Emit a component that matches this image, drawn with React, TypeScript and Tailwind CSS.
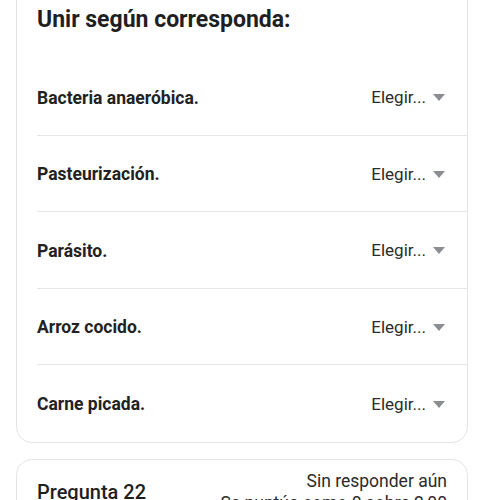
import React from "react";

const rows = [
  "Bacteria anaeróbica.",
  "Pasteurización.",
  "Parásito.",
  "Arroz cocido.",
  "Carne picada.",
];

function Caret() {
  return (
    <svg width="12" height="7" viewBox="0 0 12 7" className="ml-[7px]">
      <path d="M0 0 L12 0 L6 7 Z" fill="#8a8d91" />
    </svg>
  );
}

export default function App() {
  return (
    <div
      className="w-[484px] h-[500px] overflow-hidden bg-white text-[#212121]"
      style={{ fontFamily: "Roboto, 'Noto Sans', sans-serif" }}
    >
      <div className="mx-4 -mt-[24px] border border-[#e3e4e6] rounded-2xl bg-white">
        <div className="pl-5 pt-[29px] h-[82px]">
          <h2 className="text-[23px] font-bold leading-[28px] text-[#1f1f1f]">
            Unir según corresponda:
          </h2>
        </div>
        <div className="pl-5">
          {rows.map((r, i) => (
            <div
              key={r}
              className={
                "flex items-center justify-between h-[76.5px] pt-[2px] pr-[22px] " +
                (i < rows.length - 1 ? "border-b border-[#e6e7e9]" : "")
              }
            >
              <span className="text-[17.5px] font-bold text-[#222]">{r}</span>
              <span className="flex items-center text-[17px] text-[#2b2b2b]">
                Elegir...
                <Caret />
              </span>
            </div>
          ))}
        </div>
      </div>
      <div className="mx-4 mt-[16px] border border-[#e3e4e6] rounded-2xl bg-white pl-5 pr-5 pt-[10px] pb-3 flex items-center justify-between">
        <span className="text-[20px] font-medium text-[#1f1f1f]">Pregunta 22</span>
        <div className="text-right text-[17.5px] leading-[22px] text-[#2b2b2b]">
          <div>Sin responder aún</div>
          <div>Se puntúa como 0 sobre 2,00</div>
        </div>
      </div>
    </div>
  );
}
